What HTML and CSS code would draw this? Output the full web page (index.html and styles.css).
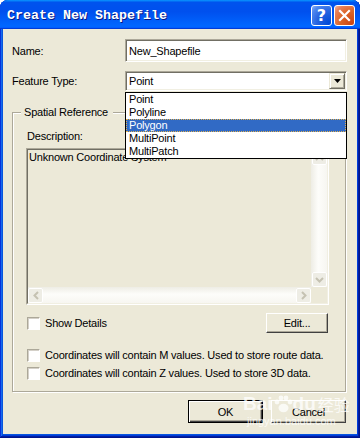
FILE: index.html
```html
<!DOCTYPE html>
<html lang="en">
<head>
<meta charset="UTF-8" />
<title>Create New Shapefile</title>
<link rel="stylesheet" href="styles.css">
</head>
<body>
<div class="window">
  <div class="titlebar">
    <span class="title">Create New Shapefile</span>
    <div class="title-buttons">
      <span class="tbtn help">?</span>
      <span class="tbtn close">
        <svg width="13" height="13" viewBox="0 0 13 13"><path d="M2 2 L11 11 M11 2 L2 11" stroke="#fff" stroke-width="2.2" stroke-linecap="square"/></svg>
      </span>
    </div>
  </div>

  <div class="client">
    <div class="field-row row-name">
      <label>Name:</label>
      <div class="textbox">New_Shapefile</div>
    </div>

    <div class="field-row row-type">
      <label>Feature Type:</label>
      <div class="combo">
        <span class="combo-value">Point</span>
        <span class="combo-btn">
          <svg width="7" height="4" viewBox="0 0 7 4"><path d="M0 0 H7 L3.5 4 Z" fill="#000"/></svg>
        </span>
        <ul class="combo-list">
          <li>Point</li>
          <li>Polyline</li>
          <li class="selected">Polygon</li>
          <li>MultiPoint</li>
          <li>MultiPatch</li>
        </ul>
      </div>
    </div>

    <fieldset class="group">
      <legend>Spatial Reference</legend>
      <div class="desc-label">Description:</div>
      <div class="desc-box">
        <div class="desc-inner">
          <div class="desc-text">Unknown Coordinate System</div>
          <div class="vscroll">
            <span class="sbtn">
              <svg width="9" height="6" viewBox="0 0 9 6"><path d="M1 5 L4.5 1.5 L8 5" fill="none" stroke="#C5C2B2" stroke-width="2"/></svg>
            </span>
            <span class="sbtn">
              <svg width="9" height="6" viewBox="0 0 9 6"><path d="M1 1 L4.5 4.5 L8 1" fill="none" stroke="#C5C2B2" stroke-width="2"/></svg>
            </span>
          </div>
          <div class="hscroll">
            <span class="sbtn">
              <svg width="6" height="9" viewBox="0 0 6 9"><path d="M5 1 L1.5 4.5 L5 8" fill="none" stroke="#C5C2B2" stroke-width="2"/></svg>
            </span>
            <span class="sbtn">
              <svg width="6" height="9" viewBox="0 0 6 9"><path d="M1 1 L4.5 4.5 L1 8" fill="none" stroke="#C5C2B2" stroke-width="2"/></svg>
            </span>
          </div>
          <div class="corner"></div>
        </div>
      </div>

      <div class="details-row">
        <label class="check"><span class="box"></span>Show Details</label>
        <button class="btn edit">Edit...</button>
      </div>
      <label class="check check-m"><span class="box"></span>Coordinates will contain M values. Used to store route data.</label>
      <label class="check"><span class="box"></span>Coordinates will contain Z values. Used to store 3D data.</label>
    </fieldset>

    <div class="actions">
      <button class="btn default">OK</button>
      <button class="btn">Cancel</button>
    </div>
  </div>

  <!-- watermark from the source screenshot -->
  <div class="watermark">
    <div class="wm-brand">
      Bai<svg width="20" height="20" viewBox="0 0 20 20">
        <circle cx="4" cy="8" r="2.4"/><circle cx="8" cy="4" r="2.4"/><circle cx="13" cy="4" r="2.4"/><circle cx="17" cy="8" r="2.4"/>
        <ellipse cx="10.5" cy="14" rx="5" ry="4.2"/>
      </svg>du<span class="wm-cn">经验</span>
    </div>
    <div class="wm-url">jingyan.baidu.com</div>
  </div>
</div>
</body>
</html>
```

FILE: styles.css
```css
* {
  margin: 0; padding: 0; box-sizing: border-box;
}
body {
  margin: 0;
  background: #fff;
  font-family: 'Liberation Sans', Arial, sans-serif;
  font-size: 11px;
  letter-spacing: -0.2px;
  color: #000;
}
.window {
  position: relative;
  width: 360px;
  height: 438px;
  display: flex;
  flex-direction: column;
  background: #0855dd;
  border-radius: 8px 8px 0 0;
  overflow: hidden;
  box-shadow: inset -1px -1px #00138c, inset 1px 1px #0831d9,
              inset -2px -2px #001ea0, inset 2px 2px #166aee,
              inset -3px -3px #003bda, inset 3px 3px #0855dd;
}
.titlebar {
  flex: none;
  height: 29px;
  display: flex;
  align-items: center;
  justify-content: space-between;
  padding: 0 5px 0 7px;
  background: linear-gradient(180deg, #0997ff, #0053ee 8%, #0050ee 40%, #06f 88%, #06f 93%, #005bff 95%, #003dd7 96%, #003dd7);
}
.title {
  padding-top: 2px;
  font-family: 'Liberation Mono', monospace;
  font-weight: bold;
  font-size: 13.33px;
  letter-spacing: 0;
  color: #fff;
  text-shadow: 1px 1px 0 #0a1883;
}
.title-buttons {
  display: flex;
  gap: 2px;
  margin-top: 1px;
}
.tbtn {
  width: 21px;
  height: 21px;
  border: 1px solid #fff;
  border-radius: 3px;
  display: flex;
  align-items: center;
  justify-content: center;
  color: #fff;
}
.help {
  background: radial-gradient(circle at 90% 90%, #0048d8 0%, #2663e0 50%, #4d86ef 80%, #8db1f7 100%);
  font-family: 'DejaVu Sans', sans-serif;
  font-weight: bold;
  font-size: 16px;
  letter-spacing: 0;
}
.close {
  background: radial-gradient(circle at 90% 90%, #cc4614 0%, #dc6527 50%, #e8805a 80%, #f3b49c 100%);
}

.client {
  flex: 1;
  margin: 0 3px 4px 3px;
  padding: 10px 11px 0 9px;
  background: #ece9d8;
}
.field-row {
  display: grid;
  grid-template-columns: 113px 222px;
  align-items: center;
}
.row-name { height: 23px; }
.row-type { height: 20px; margin-top: 9px; }

.textbox, .combo {
  background: #fff;
  border: 1px solid;
  border-color: #aca899 #fff #fff #aca899;
  box-shadow: inset 1px 1px #716f64, inset -1px -1px #f1efe2;
  display: flex;
  align-items: center;
  padding-left: 3px;
}
.textbox { height: 23px; }
.combo {
  position: relative;
  height: 20px;
}
.combo-btn {
  margin-left: auto;
  margin-right: 1px;
  width: 16px;
  height: 16px;
  display: flex;
  align-items: center;
  justify-content: center;
  background: #ece9d8;
  border: 1px solid;
  border-color: #ece9d8 #716f64 #716f64 #ece9d8;
  box-shadow: inset 1px 1px #fff, inset -1px -1px #aca899;
}
.combo-list {
  position: absolute;
  z-index: 5;
  left: -1px;
  top: 20px;
  width: 222px;
  list-style: none;
  background: #fff;
  border: 1px solid #000;
}
.combo-list li {
  height: 13px;
  line-height: 13px;
  padding-left: 3px;
}
.combo-list li.selected {
  background: #316ac5;
  color: #fff;
  outline: 1px dotted #e0b050;
  outline-offset: -1px;
}

.group {
  margin-top: 14px;
  width: 334px;
  min-inline-size: 0;
  border: 1px solid #aca899;
  box-shadow: 1px 1px 0 #fff, inset 1px 1px 0 #fff;
  padding: 11px 0 9px 13px;
}
.group legend {
  margin-left: -5px;
  padding: 0 5px 0 3px;
  line-height: 14px;
  background: #ece9d8;
}
.desc-label {
  line-height: 13px;
  padding-left: 1px;
}
.desc-box {
  margin-top: 5px;
  width: 303px;
  height: 157px;
  border: 1px solid;
  border-color: #aca899 #fff #fff #aca899;
}
.desc-inner {
  height: 100%;
  border: 1px solid;
  border-color: #716f64 #f1efe2 #f1efe2 #716f64;
  display: grid;
  grid-template-columns: 1fr 16px;
  grid-template-rows: 1fr 16px;
}
.desc-text {
  padding: 1px 0 0 1px;
  line-height: 13px;
}
.vscroll, .hscroll {
  display: flex;
  justify-content: space-between;
  align-items: center;
}
.vscroll {
  flex-direction: column;
  background: linear-gradient(90deg, #eeede5, #fdfdfa 45%, #f7f6f1);
}
.hscroll {
  background: linear-gradient(180deg, #eeede5, #fdfdfa 45%, #f7f6f1);
}
.sbtn {
  width: 15px;
  height: 15px;
  display: flex;
  align-items: center;
  justify-content: center;
  border: 1px solid #fff;
  border-radius: 2px;
  background: #eeede5;
}
.corner { background: #ece9d8; }

.details-row {
  margin-top: 8px;
  width: 303px;
  height: 20px;
  display: flex;
  align-items: center;
  justify-content: space-between;
}
.check {
  display: flex;
  align-items: center;
  gap: 5px;
  height: 18px;
  padding-left: 1px;
}
.check-m { margin-top: 13px; }
.box {
  width: 13px;
  height: 13px;
  background: #fff;
  border: 1px solid;
  border-color: #aca899 #fff #fff #aca899;
  box-shadow: inset 1px 1px 0 #d4d0c8;
}

.btn {
  font-family: inherit;
  font-size: 11px;
  letter-spacing: -0.2px;
  color: #000;
  background: #ece9d8;
  border: 1px solid;
  border-color: #fff #404040 #404040 #fff;
  box-shadow: inset -1px -1px #aca899;
}
.edit {
  width: 62px;
  height: 20px;
  margin-right: 1px;
}
.actions {
  margin-top: 8px;
  display: flex;
  justify-content: flex-end;
  gap: 8px;
}
.actions .btn {
  width: 75px;
  height: 23px;
}
.btn.default {
  border: 1px solid #000;
  box-shadow: inset 1px 1px #fff, inset -1px -1px #404040, inset -2px -2px #aca899;
}

.watermark {
  position: absolute;
  left: 243px;
  top: 394px;
  color: rgba(255, 255, 255, 0.75);
  fill: rgba(255, 255, 255, 0.75);
  letter-spacing: 0;
  pointer-events: none;
}
.wm-brand {
  display: flex;
  align-items: center;
  font-weight: bold;
  font-size: 19px;
  line-height: 20px;
}
.wm-cn {
  margin-left: 2px;
  font-family: 'Noto Sans CJK SC', sans-serif;
  font-size: 16px;
  font-weight: normal;
}
.wm-url {
  margin-top: 1px;
  padding-left: 4px;
  font-size: 11px;
  line-height: 12px;
}
```
